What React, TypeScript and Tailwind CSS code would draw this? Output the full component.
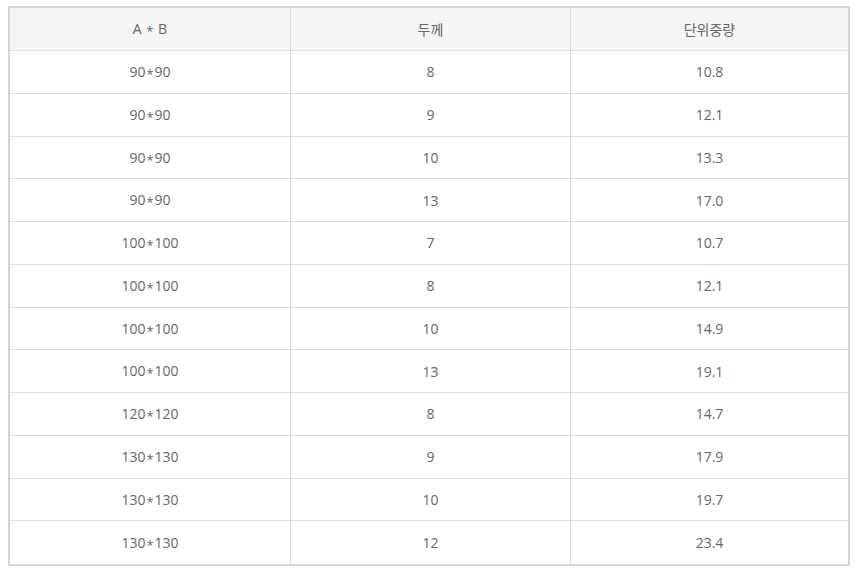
import React from 'react';

const rows: [string, string, string][] = [
  ['90*90', '8', '10.8'],
  ['90*90', '9', '12.1'],
  ['90*90', '10', '13.3'],
  ['90*90', '13', '17.0'],
  ['100*100', '7', '10.7'],
  ['100*100', '8', '12.1'],
  ['100*100', '10', '14.9'],
  ['100*100', '13', '19.1'],
  ['120*120', '8', '14.7'],
  ['130*130', '9', '17.9'],
  ['130*130', '10', '19.7'],
  ['130*130', '12', '23.4'],
];

// asterisk sits small and centred in the original font
function Size({ text }: { text: string }) {
  const parts = text.split('*');
  return (
    <span>
      {parts.map((p, i) => (
        <React.Fragment key={i}>
          {i > 0 && <span className="mx-[1px] inline-block translate-y-[2px] text-[13px]">*</span>}
          {p}
        </React.Fragment>
      ))}
    </span>
  );
}

export default function App() {
  return (
    <div className="min-h-[572px] bg-white pt-[6px] pl-[8px] font-['Open_Sans','Noto_Sans_CJK_KR',sans-serif] text-[14px] text-[#666]">
      <div className="w-[842px] border-2 border-[#d6d6d6]">
        <div className="grid h-[43px] grid-cols-[281px_280px_1fr] border-b border-[#dcdcdc] bg-[#f5f5f5]">
          <div className="flex items-center justify-center border-r border-[#dcdcdc]">
            <Size text="A * B" />
          </div>
          <div className="flex items-center justify-center border-r border-[#dcdcdc]">두께</div>
          <div className="flex items-center justify-center">단위중량</div>
        </div>
        {rows.map((r, i) => (
          <div
            key={i}
            className={`grid h-[42.75px] grid-cols-[281px_280px_1fr] ${i < rows.length - 1 ? 'border-b border-[#dcdcdc]' : ''}`}
          >
            <div className="flex items-center justify-center border-r border-[#dcdcdc]">
              <Size text={r[0]} />
            </div>
            <div className="flex items-center justify-center border-r border-[#dcdcdc]">{r[1]}</div>
            <div className="flex items-center justify-center">{r[2]}</div>
          </div>
        ))}
      </div>
    </div>
  );
}
